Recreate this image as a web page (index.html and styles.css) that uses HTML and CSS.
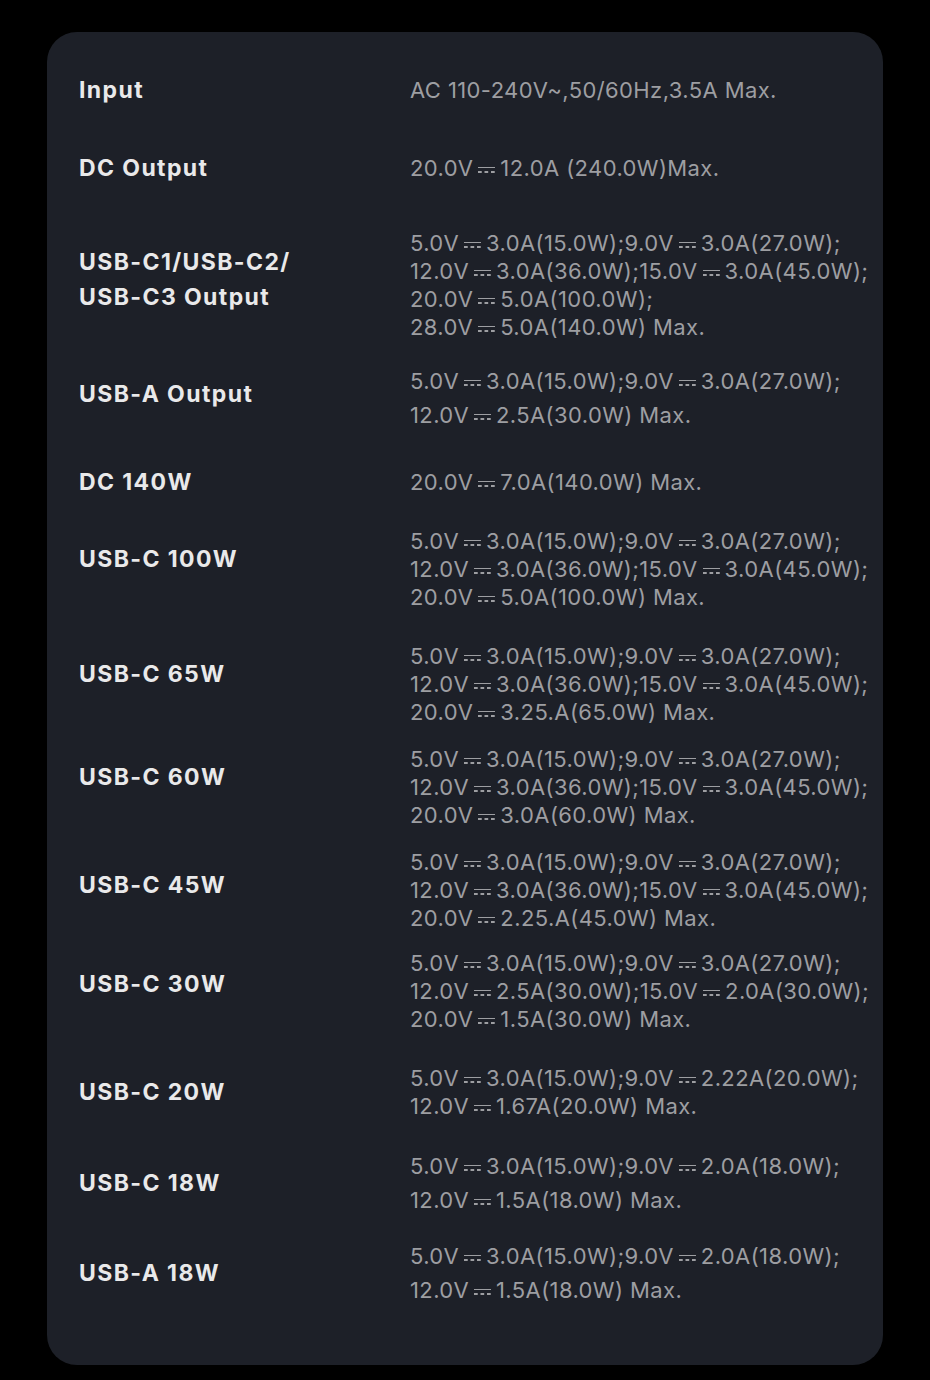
FILE: index.html
```html
<!DOCTYPE html>
<html lang="en">
<head>
<meta charset="utf-8">
<title>Specifications</title>
<link rel="stylesheet" href="styles.css">
</head>
<body>
<div class="card">
  <div class="row">
    <div class="label">Input</div>
    <div class="value">AC 110-240V~,50/60Hz,3.5A Max.</div>
  </div>
  <div class="row g50">
    <div class="label">DC Output</div>
    <div class="value">20.0V<span class="dc"></span>12.0A (240.0W)Max.</div>
  </div>
  <div class="row g47">
    <div class="label two lift-s">USB-C1/USB-C2/<br>USB-C3 Output</div>
    <div class="value">5.0V<span class="dc"></span>3.0A(15.0W);9.0V<span class="dc"></span>3.0A(27.0W);<br>12.0V<span class="dc"></span>3.0A(36.0W);15.0V<span class="dc"></span>3.0A(45.0W);<br>20.0V<span class="dc"></span>5.0A(100.0W);<br>28.0V<span class="dc"></span>5.0A(140.0W) Max.</div>
  </div>
  <div class="row g23">
    <div class="label lift-xs">USB-A Output</div>
    <div class="value loose">5.0V<span class="dc"></span>3.0A(15.0W);9.0V<span class="dc"></span>3.0A(27.0W);<br>12.0V<span class="dc"></span>2.5A(30.0W) Max.</div>
  </div>
  <div class="row g36">
    <div class="label">DC 140W</div>
    <div class="value">20.0V<span class="dc"></span>7.0A(140.0W) Max.</div>
  </div>
  <div class="row g31">
    <div class="label lift">USB-C 100W</div>
    <div class="value">5.0V<span class="dc"></span>3.0A(15.0W);9.0V<span class="dc"></span>3.0A(27.0W);<br>12.0V<span class="dc"></span>3.0A(36.0W);15.0V<span class="dc"></span>3.0A(45.0W);<br>20.0V<span class="dc"></span>5.0A(100.0W) Max.</div>
  </div>
  <div class="row g31">
    <div class="label lift">USB-C 65W</div>
    <div class="value">5.0V<span class="dc"></span>3.0A(15.0W);9.0V<span class="dc"></span>3.0A(27.0W);<br>12.0V<span class="dc"></span>3.0A(36.0W);15.0V<span class="dc"></span>3.0A(45.0W);<br>20.0V<span class="dc"></span>3.25.A(65.0W) Max.</div>
  </div>
  <div class="row g19">
    <div class="label lift">USB-C 60W</div>
    <div class="value">5.0V<span class="dc"></span>3.0A(15.0W);9.0V<span class="dc"></span>3.0A(27.0W);<br>12.0V<span class="dc"></span>3.0A(36.0W);15.0V<span class="dc"></span>3.0A(45.0W);<br>20.0V<span class="dc"></span>3.0A(60.0W) Max.</div>
  </div>
  <div class="row g19">
    <div class="label lift-s">USB-C 45W</div>
    <div class="value">5.0V<span class="dc"></span>3.0A(15.0W);9.0V<span class="dc"></span>3.0A(27.0W);<br>12.0V<span class="dc"></span>3.0A(36.0W);15.0V<span class="dc"></span>3.0A(45.0W);<br>20.0V<span class="dc"></span>2.25.A(45.0W) Max.</div>
  </div>
  <div class="row g17">
    <div class="label lift-m">USB-C 30W</div>
    <div class="value">5.0V<span class="dc"></span>3.0A(15.0W);9.0V<span class="dc"></span>3.0A(27.0W);<br>12.0V<span class="dc"></span>2.5A(30.0W);15.0V<span class="dc"></span>2.0A(30.0W);<br>20.0V<span class="dc"></span>1.5A(30.0W) Max.</div>
  </div>
  <div class="row g31">
    <div class="label">USB-C 20W</div>
    <div class="value">5.0V<span class="dc"></span>3.0A(15.0W);9.0V<span class="dc"></span>2.22A(20.0W);<br>12.0V<span class="dc"></span>1.67A(20.0W) Max.</div>
  </div>
  <div class="row g29">
    <div class="label">USB-C 18W</div>
    <div class="value loose">5.0V<span class="dc"></span>3.0A(15.0W);9.0V<span class="dc"></span>2.0A(18.0W);<br>12.0V<span class="dc"></span>1.5A(18.0W) Max.</div>
  </div>
  <div class="row g22">
    <div class="label">USB-A 18W</div>
    <div class="value loose">5.0V<span class="dc"></span>3.0A(15.0W);9.0V<span class="dc"></span>2.0A(18.0W);<br>12.0V<span class="dc"></span>1.5A(18.0W) Max.</div>
  </div>
</div>
</body>
</html>
```

FILE: styles.css
```css
html, body {
  margin: 0;
  padding: 0;
  background: #000;
}

body {
  padding: 32px 47px 15px 47px;
  font-family: Inter, "Liberation Sans", sans-serif;
}

.card {
  width: 836px;
  box-sizing: border-box;
  min-height: 1333px;
  background: #1d2028;
  border-radius: 30px;
  padding: 44px 15px 58px 32px;
  display: flex;
  flex-direction: column;
}

.row {
  display: flex;
  align-items: center;
}

.g50 { margin-top: 50px; }
.g47 { margin-top: 47px; }
.g36 { margin-top: 36px; }
.g31 { margin-top: 31px; }
.g29 { margin-top: 29px; }
.g23 { margin-top: 23px; }
.g22 { margin-top: 22px; }
.g19 { margin-top: 19px; }
.g17 { margin-top: 17px; }

.label {
  width: 331px;
  flex: none;
  color: #e9e9ea;
  font-weight: 700;
  font-size: 23px;
  line-height: 28px;
  letter-spacing: 1.4px;
}

.label.two {
  line-height: 35px;
}

.lift-xs { margin-bottom: 8px; }
.lift-s { margin-bottom: 11px; }
.lift-m { margin-bottom: 14px; }
.lift { margin-bottom: 20px; }

.value {
  color: #9d9ea2;
  font-size: 22px;
  line-height: 28px;
  letter-spacing: 0.4px;
  white-space: nowrap;
}

.value.loose {
  line-height: 34px;
}

.dc {
  display: inline-block;
  width: 17px;
  height: 6px;
  margin: 0 5px;
  vertical-align: 3px;
  box-sizing: border-box;
  border-top: 1.6px solid currentColor;
  background: linear-gradient(to right, currentColor 4px, transparent 4px) left bottom / 6.5px 1.6px repeat-x;
}
```
